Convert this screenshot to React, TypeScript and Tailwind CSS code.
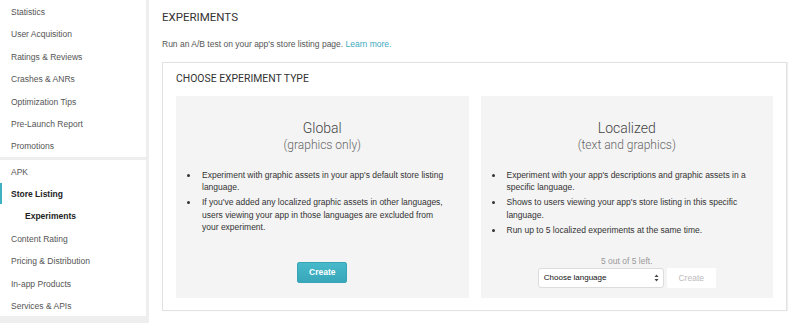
import React from "react";

const arial = { fontFamily: '"Liberation Sans", Arial, sans-serif' };
const roboto = { fontFamily: 'Roboto, "Liberation Sans", sans-serif' };

function NavItem({ label, active, sub }: { label: string; active?: boolean; sub?: boolean }) {
  return (
    <div className="relative h-[22.4px] flex items-center">
      {active && <div className="absolute left-0 top-[1px] bottom-[1px] w-[2px] bg-[#3fb1c3]" />}
      <span
        className={
          (sub ? "pl-[25px] " : "pl-[11px] ") +
          (active || sub ? "font-bold text-[#222] " : "text-[#555] ") +
          "text-[8.5px] leading-none pt-[2px]"
        }
      >
        {label}
      </span>
    </div>
  );
}

function Bullet({ children }: { children: React.ReactNode }) {
  return (
    <li className="flex pl-[11px] mb-[2.5px]">
      <span className="w-[15px] shrink-0 flex pt-[5px]">
        <span className="w-[3px] h-[3px] rounded-full bg-[#333]" />
      </span>
      <span className="text-[8.5px] leading-[12.4px] text-[#333]">{children}</span>
    </li>
  );
}

export default function App() {
  return (
    <div className="w-[800px] h-[323px] overflow-hidden bg-[#eeeeee] flex gap-[3px]" style={arial}>
      <div className="w-[146px] shrink-0 flex flex-col gap-[3px]">
        <div className="bg-white">
          <NavItem label="Statistics" />
          <NavItem label="User Acquisition" />
          <NavItem label="Ratings & Reviews" />
          <NavItem label="Crashes & ANRs" />
          <NavItem label="Optimization Tips" />
          <NavItem label="Pre-Launch Report" />
          <NavItem label="Promotions" />
        </div>
        <div className="bg-white">
          <NavItem label="APK" />
          <NavItem label="Store Listing" active />
          <NavItem label="Experiments" sub />
          <NavItem label="Content Rating" />
          <NavItem label="Pricing & Distribution" />
          <NavItem label="In-app Products" />
          <NavItem label="Services & APIs" />
        </div>
      </div>
      <div className="flex-1 bg-white pl-[13px] pt-[10px]">
        <div className="text-[11.5px] leading-[14px] text-[#333]" style={roboto}>
          EXPERIMENTS
        </div>
        <div className="mt-[14px] text-[8.5px] leading-[12px] text-[#555]">
          Run an A/B test on your app's store listing page.{" "}
          <span className="text-[#3aa9c0]">Learn more.</span>
        </div>
        <div className="mt-[12px] w-[625px] border border-[#e2e2e2] shadow-[1px_0_1px_rgba(0,0,0,0.06)] pt-[10px] px-[13px] pb-[12px]">
          <div className="text-[10.4px] leading-[12px] text-[#333]" style={roboto}>
            CHOOSE EXPERIMENT TYPE
          </div>
          <div className="mt-[11px] flex gap-[12px]">
            <div className="w-[293px] h-[202px] bg-[#f4f4f4] flex flex-col">
              <div className="pt-[24px] text-center" style={roboto}>
                <div className="text-[14px] leading-[16px] font-light text-[#444]">Global</div>
                <div className="mt-[2px] text-[12px] leading-[14px] font-light text-[#666]">(graphics only)</div>
              </div>
              <ul className="mt-[17px]">
                <Bullet>
                  Experiment with graphic assets in your app's default store listing
                  <br />
                  language.
                </Bullet>
                <Bullet>
                  If you've added any localized graphic assets in other languages,
                  <br />
                  users viewing your app in those languages are excluded from
                  <br />
                  your experiment.
                </Bullet>
              </ul>
              <div className="mt-auto mb-[15px] flex justify-center">
                <button className="w-[50px] h-[21px] rounded-[2px] border border-[#38a5b7] bg-gradient-to-b from-[#46b9ca] to-[#38a7b9] text-white text-[8.5px] font-bold">
                  Create
                </button>
              </div>
            </div>
            <div className="w-[293px] h-[202px] bg-[#f4f4f4] flex flex-col">
              <div className="pt-[24px] text-center" style={roboto}>
                <div className="text-[14px] leading-[16px] font-light text-[#444]">Localized</div>
                <div className="mt-[2px] text-[12px] leading-[14px] font-light text-[#666]">(text and graphics)</div>
              </div>
              <ul className="mt-[17px]">
                <Bullet>
                  Experiment with your app's descriptions and graphic assets in a
                  <br />
                  specific language.
                </Bullet>
                <Bullet>
                  Shows to users viewing your app's store listing in this specific
                  <br />
                  language.
                </Bullet>
                <Bullet>Run up to 5 localized experiments at the same time.</Bullet>
              </ul>
              <div className="mt-auto pb-[10px] flex flex-col items-center">
                <div className="text-[8.5px] leading-[12px] text-[#999]">5 out of 5 left.</div>
                <div className="mt-[1px] flex gap-[3px]">
                  <div className="w-[126px] h-[20px] bg-white border border-[#dcdcdc] rounded-[3px] flex items-center justify-between pl-[5px] pr-[4px]">
                    <span className="text-[8px] text-[#111]">Choose language</span>
                    <svg width="5" height="8" viewBox="0 0 5 8">
                      <path d="M2.5 0.5 L4.5 3 L0.5 3 Z" fill="#444" />
                      <path d="M2.5 7.5 L4.5 5 L0.5 5 Z" fill="#444" />
                    </svg>
                  </div>
                  <div className="w-[49px] h-[20px] bg-white rounded-[2px] flex items-center justify-center text-[8.5px] text-[#bbb]">
                    Create
                  </div>
                </div>
              </div>
            </div>
          </div>
        </div>
      </div>
    </div>
  );
}
